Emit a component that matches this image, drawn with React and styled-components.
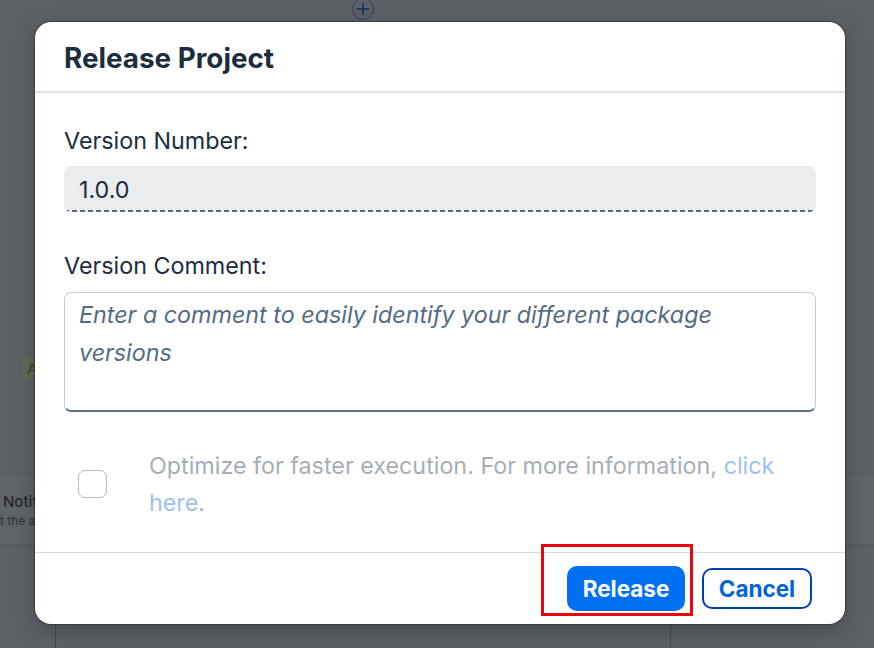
import React from "react";
import styled, { createGlobalStyle } from "styled-components";

const Global = createGlobalStyle`
  html, body { margin: 0; padding: 0; }
  body { font-family: Inter, "Noto Sans", "Liberation Sans", sans-serif; background: #5d6064; }
  * { box-sizing: border-box; }
`;

const Page = styled.div`
  position: relative;
  width: 874px;
  height: 648px;
  overflow: hidden;
  background: #5d6064;
  display: flex;
  flex-direction: column;
`;

const TopStrip = styled.div`
  height: 22px;
  display: flex;
  align-items: flex-start;
  padding-left: 352px;
  margin-top: -2px;
`;

const MidArea = styled.div`
  height: 458px;
  padding: 338px 0 0 22px;
`;

const Tag = styled.div`
  width: 60px;
  height: 22px;
  border-radius: 4px;
  background: #626a55;
  color: #2f4a2a;
  font-size: 15px;
  line-height: 22px;
  padding-left: 5px;
`;

const CardRow = styled.div`
  height: 67px;
  display: flex;
  justify-content: space-between;
`;

const BgCard = styled.div`
  width: ${(p) => p.$w}px;
  background: #606367;
  border-top: 1px solid #66696d;
  border-bottom: 1px solid #56595d;
  padding: ${(p) => p.$pad};
`;

const BgTitle = styled.div`
  font-size: 15px;
  font-weight: 500;
  color: #24282d;
  line-height: 20px;
`;

const BgSub = styled.div`
  font-size: 12px;
  color: #2e3237;
  line-height: 18px;
  margin-left: -3px;
`;

const Dots = styled.div`
  font-size: 14px;
  color: #1b3566;
  letter-spacing: 1px;
  font-weight: 700;
`;

const BottomArea = styled.div`
  flex: 1;
  display: grid;
  grid-template-columns: 55px 615px 1fr;
`;

const BgCol = styled.div`
  border-left: ${(p) => (p.$line ? "1px solid #45484c" : "none")};
`;

const Dialog = styled.div`
  position: absolute;
  left: 35px;
  top: 22px;
  width: 810px;
  height: 602px;
  background: #fff;
  border-radius: 16px;
  overflow: hidden;
  display: flex;
  flex-direction: column;
  box-shadow: 0 0 0 1px rgba(35, 45, 58, 0.55), 0 6px 20px rgba(0, 0, 0, 0.25);
  color: #1d2d3e;
`;

const Header = styled.div`
  height: 71px;
  flex: none;
  display: flex;
  align-items: center;
  padding: 3px 29px 0;
  border-bottom: 2px solid #e2e2e2;
  box-shadow: 0 2px 3px rgba(0, 0, 0, 0.04);
`;

const Title = styled.h1`
  margin: 0;
  font-size: 27.8px;
  font-weight: 700;
  color: #1d2d3e;
`;

const Content = styled.div`
  flex: 1;
  padding: 0 29px;
  display: flex;
  flex-direction: column;
`;

const Label = styled.label`
  display: block;
  font-size: 23.3px;
  line-height: 30px;
  margin-top: ${(p) => p.$mt}px;
  margin-bottom: ${(p) => p.$mb}px;
  color: #1d2d3e;
`;

const Input = styled.div`
  height: 46px;
  border-radius: 7px;
  background:
    repeating-linear-gradient(90deg, #556b82 0 5px, transparent 5px 8px) left bottom / 100% 2px no-repeat,
    #eaecee;
  padding: 0 15px;
  display: flex;
  align-items: center;
  font-size: 23.3px;
  color: #1d2d3e;
`;

const TextArea = styled.div`
  height: 120px;
  border: 1px solid #c7cdd4;
  border-bottom: 2px solid #5b728a;
  border-radius: 7px;
  padding: 3px 14px;
`;

const Placeholder = styled.div`
  font-size: 23.3px;
  line-height: 38px;
  font-style: italic;
  color: #556b82;
`;

const CheckRow = styled.div`
  margin-top: 35px;
  display: flex;
  align-items: center;
  padding-left: 14px;
  gap: 42px;
`;

const Checkbox = styled.span`
  flex: none;
  width: 29px;
  height: 28px;
  border: 1px solid #b2bcc7;
  border-radius: 7px;
  background: #fff;
`;

const CheckText = styled.div`
  font-size: 23.3px;
  line-height: 37px;
  color: #a7aeb6;
`;

const Link = styled.a`
  color: #9cc0f2;
  text-decoration: none;
`;

const Footer = styled.div`
  height: 72px;
  flex: none;
  border-top: 1px solid #d9d9d9;
  display: flex;
  align-items: center;
  justify-content: flex-end;
  gap: 17px;
  padding-right: 33px;
`;

const Highlight = styled.div`
  position: relative;
  display: flex;
  &::after {
    content: "";
    position: absolute;
    left: -26px;
    right: -8px;
    top: -22px;
    bottom: -5px;
    border: 3px solid #e8070d;
    pointer-events: none;
  }
`;

const Button = styled.button`
  font-family: inherit;
  font-size: 22.5px;
  font-weight: 700;
  border-radius: 10px;
  cursor: pointer;
  display: flex;
  align-items: center;
  justify-content: center;
  padding: 0;
  ${(p) =>
    p.$primary
      ? `
    width: 118px; height: 45px;
    background: #0070f2; color: #fff; border: none;
  `
      : `
    width: 110px; height: 41px;
    background: #fff; color: #0064d9; border: 2px solid #0040b0;
  `}
`;

export default function App() {
  return (
    <>
      <Global />
      <Page>
        <TopStrip>
          <svg width="22" height="22" viewBox="0 0 22 22">
            <circle cx="11" cy="11" r="10.5" fill="none" stroke="#2a4670" strokeWidth="1" />
            <path d="M5 11h12M11 5v12" stroke="#1b3566" strokeWidth="1.8" />
          </svg>
        </TopStrip>
        <MidArea>
          <Tag>A</Tag>
        </MidArea>
        <CardRow>
          <BgCard $w={120} $pad="13px 0 0 3px">
            <BgTitle>Notifications</BgTitle>
            <BgSub>t the alerts</BgSub>
          </BgCard>
          <BgCard $w={60} $pad="22px 0 0 14px">
            <Dots>••</Dots>
          </BgCard>
        </CardRow>
        <BottomArea>
          <BgCol />
          <BgCol $line />
          <BgCol $line />
        </BottomArea>

        <Dialog role="dialog">
          <Header>
            <Title>Release Project</Title>
          </Header>
          <Content>
            <Label $mt={33} $mb={10}>Version Number:</Label>
            <Input>1.0.0</Input>
            <Label $mt={39} $mb={11}>Version Comment:</Label>
            <TextArea>
              <Placeholder>
                Enter a comment to easily identify your different package versions
              </Placeholder>
            </TextArea>
            <CheckRow>
              <Checkbox />
              <CheckText>
                Optimize for faster execution. For more information, <Link>click here</Link>.
              </CheckText>
            </CheckRow>
          </Content>
          <Footer>
            <Highlight>
              <Button $primary>Release</Button>
            </Highlight>
            <Button>Cancel</Button>
          </Footer>
        </Dialog>
      </Page>
    </>
  );
}
